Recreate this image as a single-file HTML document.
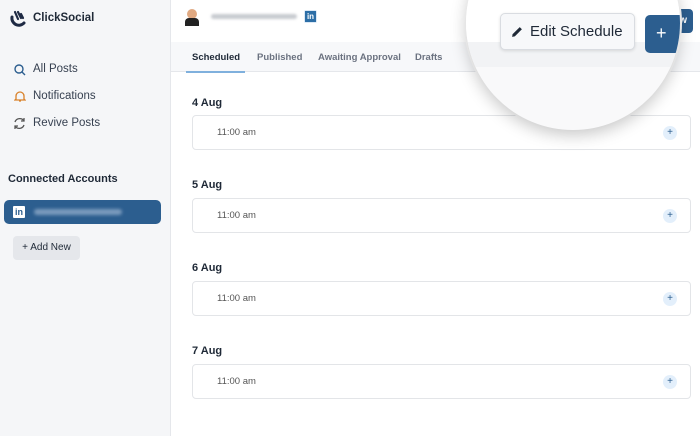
<!DOCTYPE html>
<html><head><style>
*{margin:0;padding:0;box-sizing:border-box}
body{width:700px;height:436px;overflow:hidden;font-family:"Liberation Sans",sans-serif;background:#fff;position:relative;color:#1f2937}
.sb{position:absolute;left:0;top:0;width:171px;height:436px;background:#f5f6f8;border-right:1px solid #e5e7eb}
.a{position:absolute;font-size:11.5px;color:#374151}
.card{position:absolute;left:192px;width:499px;height:35px;border:1px solid #e3e5e8;border-radius:4px;background:#fff}
.card span{position:absolute;left:24px;top:11px;font-size:9.5px;color:#555}
.card i{position:absolute;right:13px;top:10px;width:14px;height:14px;border-radius:50%;background:#e3effb;color:#2c5e8f;font-style:normal;font-size:10px;line-height:14px;text-align:center}
.d{position:absolute;left:192px;font-size:11px;font-weight:bold;color:#1f2937}
</style></head><body>
<div class="sb"></div>
<svg style="position:absolute;left:8px;top:9px" width="20" height="20" viewBox="0 0 20 20"><path d="M4 8a7 7 0 0 0 12 6" stroke="#1e2a44" stroke-width="3" fill="none" stroke-linecap="round"/><path d="M7 3l3 7M10 3l3 6M13 5l2 4" stroke="#1e2a44" stroke-width="2.2" stroke-linecap="round"/></svg>
<div class="a" style="left:33px;top:12px;font-weight:bold;color:#1f2937;font-size:11.5px">ClickSocial</div>
<svg style="position:absolute;left:14px;top:64px" width="12" height="12" viewBox="0 0 12 12"><circle cx="5" cy="5" r="4" stroke="#2c5e8f" stroke-width="1.4" fill="none"/><path d="M8 8l3 3" stroke="#2c5e8f" stroke-width="1.4"/></svg>
<div class="a" style="left:33px;top:63px">All Posts</div>
<svg style="position:absolute;left:14px;top:90px" width="12" height="13" viewBox="0 0 12 13"><path d="M2 9V6a4 4 0 0 1 8 0v3l1 1H1z M5 11h2" stroke="#d9822b" stroke-width="1.3" fill="none"/></svg>
<div class="a" style="left:33px;top:90px">Notifications</div>
<svg style="position:absolute;left:13px;top:117px" width="13" height="13" viewBox="0 0 13 13"><path d="M2 5a5 5 0 0 1 9-1M11 8a5 5 0 0 1-9 1M11 1v3H8M2 12V9h3" stroke="#555" stroke-width="1.3" fill="none"/></svg>
<div class="a" style="left:33px;top:117px">Revive Posts</div>
<div class="a" style="left:8px;top:173px;font-weight:bold;color:#1f2937;font-size:11px">Connected Accounts</div>
<div style="position:absolute;left:4px;top:200px;width:157px;height:24px;border-radius:5px;background:#2c5e8f"></div>
<div style="position:absolute;left:13px;top:206px;width:12px;height:12px;background:#fff;color:#2c5e8f;font-size:9px;font-weight:bold;line-height:12px;text-align:center;border-radius:1px">in</div>
<div style="position:absolute;left:34px;top:209px;width:88px;height:6px;border-radius:3px;background:#7b9bbd;filter:blur(1.5px)"></div>
<div style="position:absolute;left:13px;top:236px;width:67px;height:24px;border-radius:4px;background:#e5e7eb;font-size:10px;line-height:24px;text-align:center;color:#1f2937">+ Add New</div>

<div style="position:absolute;left:171px;top:42px;width:529px;height:30px;background:#f7f8fa;border-bottom:1px solid #e5e7eb"></div>
<div style="position:absolute;left:186px;top:71px;width:59px;height:2px;background:#7fb0dd"></div>
<div class="a" style="left:192px;top:52px;font-size:9.5px;font-weight:bold;color:#1f2937">Scheduled</div>
<div class="a" style="left:257px;top:52px;font-size:9.5px;font-weight:bold;color:#6b7280">Published</div>
<div class="a" style="left:318px;top:52px;font-size:9.5px;font-weight:bold;color:#6b7280">Awaiting Approval</div>
<div class="a" style="left:415px;top:52px;font-size:9.5px;font-weight:bold;color:#6b7280">Drafts</div>
<div style="position:absolute;left:187px;top:9px;width:10px;height:10px;border-radius:50%;background:#e0a982"></div>
<div style="position:absolute;left:185px;top:18px;width:14px;height:8px;border-radius:4px 4px 0 0;background:#222"></div>
<div style="position:absolute;left:211px;top:14px;width:86px;height:5px;border-radius:3px;background:#c8cbd0;filter:blur(1.2px)"></div>
<div style="position:absolute;left:304px;top:10px;width:13px;height:13px;background:#dbe8f5;border-radius:2px;padding:1px"><div style="width:11px;height:11px;background:#2c6ea6;color:#fff;font-size:8px;font-weight:bold;line-height:11px;text-align:center">in</div></div>
<div style="position:absolute;left:466px;top:10px;width:30px;height:22px;border:1px solid #d1d5db;border-radius:4px;background:#fff"></div>
<div style="position:absolute;left:647px;top:9px;width:46px;height:24px;border-radius:4px;background:#2c5e8f;color:#fff;font-size:10px;font-weight:bold;line-height:24px;text-align:right;padding-right:6px">ew</div>

<div class="d" style="top:97px">4 Aug</div><div class="card" style="top:115px"><span>11:00 am</span><i>+</i></div>
<div class="d" style="top:179px">5 Aug</div><div class="card" style="top:198px"><span>11:00 am</span><i>+</i></div>
<div class="d" style="top:262px">6 Aug</div><div class="card" style="top:281px"><span>11:00 am</span><i>+</i></div>
<div class="d" style="top:345px">7 Aug</div><div class="card" style="top:364px"><span>11:00 am</span><i>+</i></div>

<div style="position:absolute;left:466px;top:-84px;width:214px;height:214px;border-radius:50%;overflow:hidden;background:#f9f9fa;box-shadow:0 5px 16px rgba(0,0,0,.22),0 0 0 2px #fff">
 <div style="position:absolute;left:0;top:0;width:220px;height:126px;background:#fff"></div>
 <div style="position:absolute;left:0;top:126px;width:220px;height:25px;background:#f2f3f5"></div>
 <div style="position:absolute;left:34px;top:97px;width:135px;height:37px;border:1px solid #d9dce1;border-radius:5px;background:#f7f8fa;box-shadow:0 1px 3px rgba(0,0,0,.12)"></div>
 <svg style="position:absolute;left:45px;top:110px" width="12" height="12" viewBox="0 0 11 11"><path d="M1 10l0.5-2.5L8 1l2 2-6.5 6.5z" fill="#1f2937"/></svg>
 <div style="position:absolute;left:64px;top:107px;font-size:15px;color:#1f2937">Edit Schedule</div>
 <div style="position:absolute;left:179px;top:99px;width:50px;height:38px;border-radius:5px;background:#2c5e8f;color:#fff;font-size:18px;line-height:36px;padding-left:11px">+</div>
</div>
</body></html>
